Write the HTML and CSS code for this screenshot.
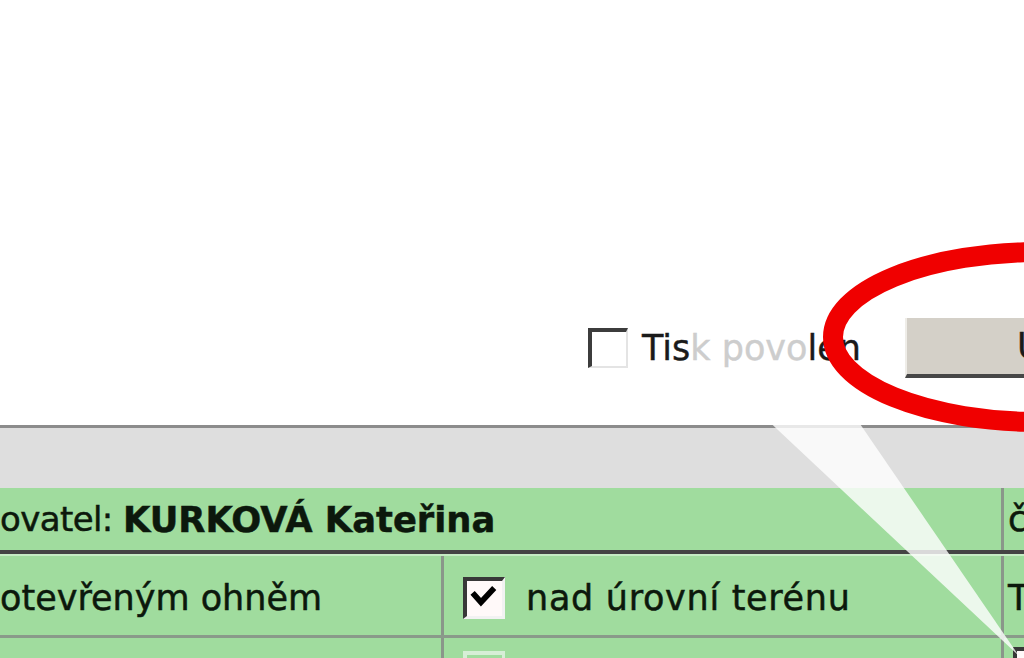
FILE: index.html
```html
<!DOCTYPE html>
<html lang="cs">
<head>
<meta charset="utf-8">
<title>Záznam</title>
<link rel="stylesheet" href="styles.css">
</head>
<body>
<div class="page">
  <div class="toolbar">
    <label class="print-toggle">
      <span class="cb"></span>
      <span class="print-label">Tis<span class="faded">k povo</span>len</span>
    </label>
    <button class="btn" type="button">Uložit</button>
  </div>
  <div class="grid">
    <div class="band"></div>
    <div class="row row-head">
      <div class="cell cell-wide"><span class="tight">ovatel:&nbsp;</span><b>KURKOVÁ Kateřina</b></div>
      <div class="cell cell-side">číslo</div>
    </div>
    <div class="row row-main">
      <div class="cell cell-a"><span>otevřeným ohněm</span></div>
      <div class="cell cell-b">
        <span class="cb cb-lg"><svg viewBox="0 0 42 42" width="34" height="34"><polyline points="8,16 16,25 30,10" fill="none" stroke="#000" stroke-width="7" stroke-linejoin="miter" stroke-linecap="square"/></svg></span>
        <span class="wide-text">nad úrovní terénu</span>
      </div>
      <div class="cell cell-side">Typ</div>
    </div>
    <div class="row row-next">
      <div class="cell cell-a"></div>
      <div class="cell cell-b cell-b-top"><span class="cb cb-lg cb-faint"></span></div>
      <div class="cell cell-side cell-side-top"><span class="cb cb-lg"></span></div>
    </div>
  </div>
  <svg class="annot" viewBox="0 0 1024 658" width="1024" height="658">
    <polygon points="748,402 845,402 1019,656" fill="#ffffff" fill-opacity="0.8"/>
    <ellipse cx="1040" cy="337" rx="207" ry="85" fill="none" stroke="#f00000" stroke-width="20"/>
  </svg>
</div>
</body>
</html>
```

FILE: styles.css
```css
html, body {
  margin: 0;
  padding: 0;
  overflow: hidden;
  background: #ffffff;
}

body {
  width: 1024px;
  height: 658px;
  font-family: "DejaVu Sans", "Noto Sans", sans-serif;
}

.page {
  position: relative;
  width: 1024px;
  height: 658px;
  overflow: hidden;
}

.toolbar {
  height: 425px;
  box-sizing: border-box;
  padding-top: 318px;
  padding-left: 588px;
  display: flex;
  align-items: flex-start;
}

.print-toggle {
  width: 317px;
  height: 60px;
  flex: none;
  display: flex;
  align-items: center;
  gap: 14px;
  font-size: 35px;
  color: #1a1a1a;
  white-space: nowrap;
  -webkit-text-stroke: 0.4px #1a1a1a;
}

.faded {
  color: #cdcdcd;
  -webkit-text-stroke: 0.4px #cdcdcd;
}

.cb {
  flex: none;
  display: flex;
  align-items: center;
  justify-content: center;
  width: 40px;
  height: 40px;
  box-sizing: border-box;
  background: #ffffff;
  border-style: solid;
  border-width: 4px 2px 2px 4px;
  border-color: #3c3c3c #e4e4e4 #e4e4e4 #3c3c3c;
}

.cb-lg {
  width: 42px;
  height: 42px;
  background: #fff9f9;
  border-width: 4px 3px 3px 4px;
  border-color: #383838 #f2f2f2 #f2f2f2 #383838;
}

.cb-faint {
  border-color: #d6eed6 #d6eed6 #d6eed6 #d6eed6;
  background: transparent;
}

.btn {
  flex: none;
  width: 260px;
  height: 60px;
  box-sizing: border-box;
  margin: 0;
  padding: 0 0 0 110px;
  background: #d4d0c8;
  border: 0;
  border-left: 2px solid #efede8;
  border-bottom: 4px solid #474747;
  text-align: left;
  font-family: "DejaVu Sans", sans-serif;
  font-size: 35px;
  color: #1a1a1a;
  -webkit-text-stroke: 0.4px #1a1a1a;
}

.grid {
  width: 1300px;
}

.band {
  height: 60px;
  background: #dedede;
  border-top: 3px solid #8c8c8c;
}

.row {
  display: flex;
  background: #a0dc9e;
}

.row-head {
  height: 62px;
  border-bottom: 4px solid #444444;
}

.row-main {
  height: 79px;
  border-top: 2px solid #c6ecc4;
  border-bottom: 3px solid #8a9a8a;
}

.row-next {
  height: 40px;
}

.cell {
  display: flex;
  align-items: center;
  box-sizing: border-box;
  font-size: 35px;
  color: #0c180c;
  white-space: nowrap;
  overflow: hidden;
  -webkit-text-stroke: 0.5px #0c180c;
}

.row-main .cell {
  padding-top: 5px;
}

.cell-wide {
  width: 1004px;
  flex: none;
  font-size: 35.3px;
  border-right: 3px solid #8a968a;
}

.tight {
  font-size: 34px;
  letter-spacing: -0.6px;
}

.cell-a {
  width: 444px;
  flex: none;
  border-right: 3px solid #8a968a;
}

.cell-b {
  width: 560px;
  flex: none;
  padding-left: 19px;
  gap: 21px;
  border-right: 3px solid #8a968a;
}

.wide-text {
  letter-spacing: 0.7px;
}

.cell-side {
  flex: 1;
  padding-left: 4px;
}

.cell-b-top {
  align-items: flex-start;
  padding-top: 13px;
}

.cell-side-top {
  align-items: flex-start;
  padding-top: 9px;
  padding-left: 9px;
}

.annot {
  position: absolute;
  left: 0;
  top: 0;
  pointer-events: none;
}
```
